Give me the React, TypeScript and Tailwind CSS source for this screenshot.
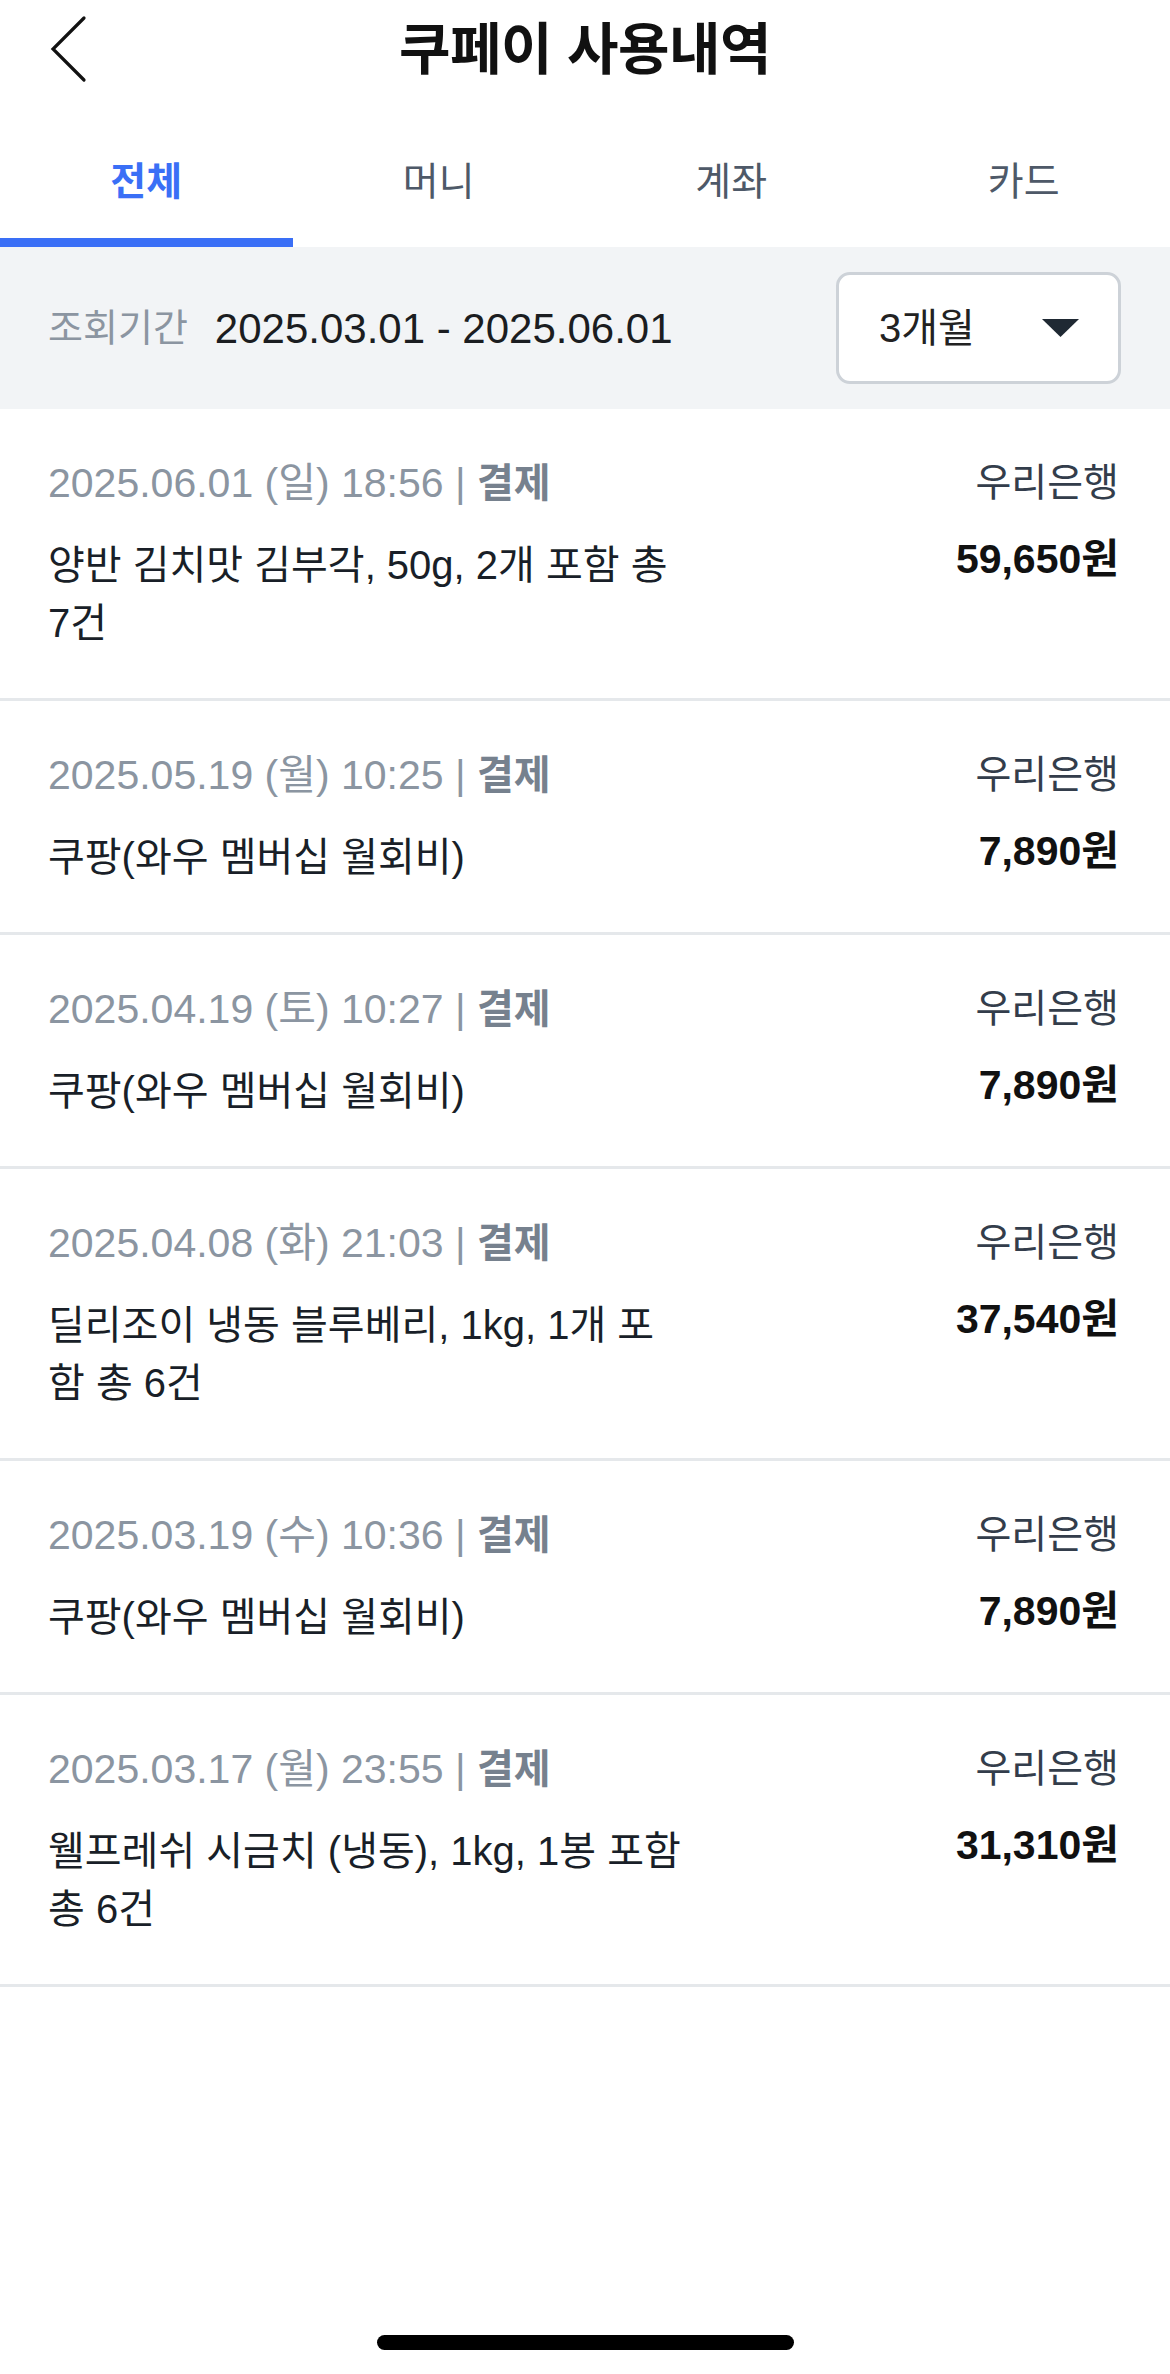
import React from "react";

type Row = {
  date: string;
  lines: string[];
  bank: string;
  amount: string;
};

const rows: Row[] = [
  { date: "2025.06.01 (일) 18:56", lines: ["양반 김치맛 김부각, 50g, 2개 포함 총", "7건"], bank: "우리은행", amount: "59,650원" },
  { date: "2025.05.19 (월) 10:25", lines: ["쿠팡(와우 멤버십 월회비)"], bank: "우리은행", amount: "7,890원" },
  { date: "2025.04.19 (토) 10:27", lines: ["쿠팡(와우 멤버십 월회비)"], bank: "우리은행", amount: "7,890원" },
  { date: "2025.04.08 (화) 21:03", lines: ["딜리조이 냉동 블루베리, 1kg, 1개 포", "함 총 6건"], bank: "우리은행", amount: "37,540원" },
  { date: "2025.03.19 (수) 10:36", lines: ["쿠팡(와우 멤버십 월회비)"], bank: "우리은행", amount: "7,890원" },
  { date: "2025.03.17 (월) 23:55", lines: ["웰프레쉬 시금치 (냉동), 1kg, 1봉 포함", "총 6건"], bank: "우리은행", amount: "31,310원" },
];

const tabs = ["전체", "머니", "계좌", "카드"];

export default function App() {
  return (
    <div className="min-h-[2374px] flex flex-col bg-white font-['Liberation_Sans','Noto_Sans_CJK_KR',sans-serif]">
      {/* Header */}
      <div className="relative h-[100px] flex items-center justify-center">
        <svg
          className="absolute left-[48px] top-[14px]"
          width="42"
          height="70"
          viewBox="0 0 42 70"
          fill="none"
        >
          <polyline points="36,4 5,35 36,66" stroke="#111" strokeWidth="3.2" strokeLinecap="round" strokeLinejoin="miter" />
        </svg>
        <h1 className="text-[56px] font-bold text-[#111] leading-none tracking-[-0.5px]">쿠페이 사용내역</h1>
      </div>

      {/* Tabs */}
      <div className="grid grid-cols-4 h-[147px]">
        {tabs.map((t, i) => (
          <div key={t} className="flex flex-col">
            <div className="flex-1 flex items-center justify-center pt-[24px]">
              <span
                className={
                  i === 0
                    ? "text-[39px] font-bold text-[#3a6ff6] leading-none"
                    : "text-[39px] text-[#4e5968] leading-none"
                }
              >
                {t}
              </span>
            </div>
            <div className={i === 0 ? "h-[9px] bg-[#3a6ff6]" : "h-[9px] bg-white"} />
          </div>
        ))}
      </div>

      {/* Filter bar */}
      <div className="h-[162px] bg-[#f2f4f6] px-[48px] pr-[49px] flex items-center justify-between">
        <div className="flex items-center gap-[27px]">
          <span className="text-[38px] text-[#8b95a1]">조회기간</span>
          <span className="text-[42px] text-[#1b1d21]">2025.03.01 - 2025.06.01</span>
        </div>
        <div className="w-[285px] h-[112px] bg-white border-[3px] border-[#cdd2d8] rounded-[14px] flex items-center justify-between pl-[40px] pr-[39px]">
          <span className="text-[40px] text-[#222]">3개월</span>
          <svg width="37" height="18" viewBox="0 0 37 18">
            <polygon points="0,0 37,0 18.5,18" fill="#1f2933" />
          </svg>
        </div>
      </div>

      {/* List */}
      <div className="flex flex-col">
        {rows.map((r, idx) => (
          <div
            key={idx}
            className="pl-[48px] pr-[51px] pt-[50px] pb-[46px] border-b-[3px] border-[#e5e8eb] flex justify-between"
          >
            <div className="flex flex-col">
              <div className="h-[48px] leading-[48px] text-[41px] text-[#8b95a1] whitespace-nowrap">
                {r.date} | <span className="font-bold text-[#76818e] text-[40px]">결제</span>
              </div>
              <div className="mt-[29px] flex flex-col">
                {r.lines.map((l, j) => (
                  <div key={j} className="leading-[58px] text-[40px] text-[#191f28] whitespace-nowrap">
                    {l}
                  </div>
                ))}
              </div>
            </div>
            <div className="flex flex-col items-end">
              <div className="h-[48px] leading-[48px] text-[39px] text-[#333d4b] whitespace-nowrap">{r.bank}</div>
              <div className="mt-[28px] h-[48px] leading-[48px] text-[41px] font-bold text-[#111] whitespace-nowrap">
                {r.amount}
              </div>
            </div>
          </div>
        ))}
      </div>

      {/* Home indicator */}
      <div className="mt-auto mb-[24px] mx-auto w-[417px] h-[15px] rounded-full bg-black" />
    </div>
  );
}
